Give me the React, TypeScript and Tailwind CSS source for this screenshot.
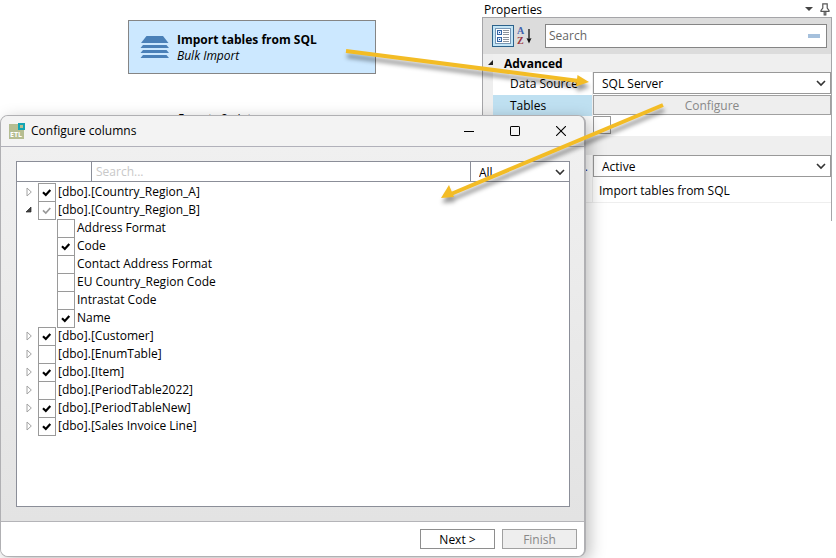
import React, { useState } from 'react';

interface TreeItem {
  id: string;
  label: string;
  checked: boolean;
  partial?: boolean;
  children?: TreeItem[];
}

const initialTables: TreeItem[] = [
  { id: 'region-a', label: '[dbo].[Country_Region_A]', checked: true },
  {
    id: 'region-b',
    label: '[dbo].[Country_Region_B]',
    checked: true,
    partial: true,
    children: [
      { id: 'address-format', label: 'Address Format', checked: false },
      { id: 'code', label: 'Code', checked: true },
      { id: 'contact-format', label: 'Contact Address Format', checked: false },
      { id: 'eu-code', label: 'EU Country_Region Code', checked: false },
      { id: 'intrastat', label: 'Intrastat Code', checked: false },
      { id: 'name', label: 'Name', checked: true },
    ],
  },
  { id: 'customer', label: '[dbo].[Customer]', checked: true },
  { id: 'enum', label: '[dbo].[EnumTable]', checked: false },
  { id: 'item', label: '[dbo].[Item]', checked: true },
  { id: 'period-2022', label: '[dbo].[PeriodTable2022]', checked: false },
  { id: 'period-new', label: '[dbo].[PeriodTableNew]', checked: true },
  { id: 'sales-line', label: '[dbo].[Sales Invoice Line]', checked: true },
];

const Chevron = () => (
  <svg className="pointer-events-none absolute top-1/2 right-1 h-2 w-2.5 -translate-y-1/2" viewBox="0 0 10 8" fill="none" stroke="#333" strokeWidth="1.6">
    <path d="M1 2 L5 6 L9 2" />
  </svg>
);

const Select = ({ id, label, options, className }: { id: string; label: string; options: string[]; className: string }) => (
  <div className={`relative bg-white ${className}`}>
    <select id={id} aria-label={label} className="h-full w-full appearance-none px-2 pt-[2px] outline-none">
      {options.map((option) => (
        <option key={option}>{option}</option>
      ))}
    </select>
    <Chevron />
  </div>
);

const CheckRow = ({ item, onToggle }: { item: TreeItem; onToggle: (id: string) => void }) => (
  <label className="flex h-[18px] items-center gap-[2px]">
    <span className="relative flex h-[18px] w-[18px]">
      <input
        type="checkbox"
        checked={item.checked}
        onChange={() => onToggle(item.id)}
        className="h-[19px] w-[18px] shrink-0 appearance-none border border-[#9a9a9a] bg-white"
      />
      {item.checked && (
        <svg className="pointer-events-none absolute inset-0" width="18" height="18" viewBox="0 0 18 18" fill="none">
          <path d="M5 9.3 L7.8 12 L12.3 7" stroke={item.partial ? '#999' : '#000'} strokeWidth={item.partial ? 1.7 : 2.2} />
        </svg>
      )}
    </span>
    <span>{item.label}</span>
  </label>
);

const Properties = () => (
  <section className="mr-1 flex w-[350px] shrink-0 flex-col">
    <header className="flex h-[17px] items-center justify-between px-[2px] pt-[2px]">
      <h2>Properties</h2>
      <div className="flex items-center gap-[6px]">
        <button aria-label="Window menu">
          <svg width="9" height="6" viewBox="0 0 9 6"><path d="M0 0 H8 L4 4 Z" fill="#444" /></svg>
        </button>
        <button aria-label="Pin">
          <svg width="10" height="13" viewBox="0 0 10 13" fill="none" stroke="#555" strokeWidth="1.2">
            <path d="M2.2 0.8 H7.8 M2.8 1 V5 L1 7.5 V8.4 H9 V7.5 L7.2 5 V1 M4.2 8.5 V12 H5.8 V8.5" />
          </svg>
        </button>
      </div>
    </header>

    <div className="flex h-[204px] flex-col border-t border-r border-l border-[#a5a5a8]">
      <div className="flex h-9 items-center bg-[#dcdcdc] pr-1 pl-[9px]">
        <button aria-label="Categorized" className="flex h-[22px] w-[22px] items-center justify-center border border-[#2c628b] bg-[#c4e5f6]">
          <svg width="16" height="16" viewBox="0 0 16 16" fill="none">
            <rect x="0.5" y="0.5" width="15" height="15" fill="#fff" stroke="#7897b5" />
            <rect x="2.5" y="2.5" width="4" height="4" fill="#dcecff" stroke="#3465a4" />
            <rect x="2.5" y="9.5" width="4" height="4" fill="#dcecff" stroke="#3465a4" />
            <path d="M4 4.5 H5 M4 11.5 H5" stroke="#173f8a" />
            <path d="M8 2.5 H14 M8 4.5 H14 M8 6.5 H14 M8 9.5 H14 M8 11.5 H14 M8 13.5 H14" stroke="#8d939b" />
          </svg>
        </button>
        <button aria-label="Alphabetical" className="ml-[3px] flex h-[22px] items-center">
          <svg width="17" height="20" viewBox="0 0 17 20" fontFamily="Liberation Serif, serif" fontSize="10" fontWeight="bold">
            <text x="0" y="8" fill="#3f62ad">A</text>
            <text x="0" y="18" fill="#9a3440">Z</text>
            <path d="M12 3 V14" stroke="#111" strokeWidth="1.3" />
            <path d="M9.5 12 L12 13 L14.5 12 L12 17.5 Z" fill="#111" />
          </svg>
        </button>
        <label className="ml-[11px] flex h-6 flex-1 items-center border border-[#858585] bg-white pr-[6px] pl-[3px]">
          <input type="text" aria-label="Search properties" placeholder="Search" className="min-w-0 flex-1 outline-none placeholder:text-[#666]" />
          <span className="h-1 w-3 bg-[#a5c0dc]" />
        </label>
      </div>

      <div className="flex flex-1 bg-white">
        <div className="w-[10px] bg-[#eee] pt-[5px] pl-[5px]">
          <svg width="6" height="6" viewBox="0 0 6 6"><path d="M6 0 V6 H0 Z" fill="#222" /></svg>
        </div>
        <div className="flex flex-1 flex-col">
          <h3 className="h-[18px] bg-[#efefef] pl-[11px] leading-5 font-bold">Advanced</h3>
          <div className="flex h-[23px]">
            <label htmlFor="source" className="w-[100px] border-r border-[#eee] pl-[17px] leading-6">Data Source</label>
            <Select id="source" label="Data Source" options={['SQL Server', 'Oracle']} className="h-[22px] flex-1 border border-[#999]" />
          </div>
          <div className="flex h-[21px]">
            <div className="w-[100px] border-r border-[#eee] bg-[#bfe0f1] pl-[17px] leading-[22px]">Tables</div>
            <button className="h-5 flex-1 border border-[#a0a0a0] bg-[#eee] pt-[2px] text-[#888]">Configure</button>
          </div>
          <div className="flex h-5 pl-[100px]">
            <input type="checkbox" aria-label="Enabled" className="h-[18px] w-[18px] appearance-none border border-[#999] bg-white" />
          </div>
          <div className="h-[19px] bg-[#efefef]" />
          <div className="flex h-[23px]">
            <div className="w-[100px] border-r border-[#eee] pr-1 text-right leading-6 text-[#23238a]">.</div>
            <Select id="status" label="Status" options={['Active', 'Inactive']} className="h-[22px] flex-1 border border-[#999]" />
          </div>
          <div className="flex h-[25px] border-b border-[#eee]">
            <div className="w-[100px] border-r border-[#eee]" />
            <div className="flex-1 pl-[6px] leading-[26px]">Import tables from SQL</div>
          </div>
        </div>
      </div>
    </div>
  </section>
);

const Canvas = () => (
  <section className="min-w-0 flex-1 bg-white pt-5 pl-32">
    <div className="flex h-[54px] w-[248px] items-center border border-[#858585] bg-[#cce8ff] pl-[11px]">
      <svg width="30" height="24" viewBox="0 0 30 24" fill="#4a80b8">
        <path d="M6.5 1 H23 L28.5 8 H1 Z" />
        <path d="M3 10 H26.5 L29 13 H0.5 Z M3 15 H26.5 L29 18 H0.5 Z M3 20 H26.5 L29 23 H0.5 Z" />
      </svg>
      <div className="pt-px pl-[7px] leading-4">
        <h1 className="font-bold">Import tables from SQL</h1>
        <p className="italic">Bulk Import</p>
      </div>
    </div>
    <p className="pt-[37px] pl-[49px] leading-4 italic">Execute Script</p>
  </section>
);

const ConfigureDialog = () => {
  const [tables, setTables] = useState(initialTables);
  const [open, setOpen] = useState<string[]>(['region-b']);

  const toggle = (id: string) => {
    const flip = (items: TreeItem[]): TreeItem[] =>
      items.map((item) => ({
        ...item,
        checked: item.id === id ? !item.checked : item.checked,
        children: item.children && flip(item.children),
      }));
    setTables(flip);
  };

  const toggleOpen = (id: string) => {
    setOpen((prev) => (prev.includes(id) ? prev.filter((x) => x !== id) : [...prev, id]));
  };

  return (
    <div role="dialog" aria-label="Configure columns" className="absolute top-[115px] right-[250px] bottom-px left-0 flex flex-col overflow-hidden rounded-lg border border-r-2 border-[#b0b0b3] bg-[#eee] shadow-[4px_4px_16px_rgba(0,0,0,0.25)]">
      <header className="flex h-[31px] items-center border-b border-[#b1b1ba] bg-[#f3f3f3] pl-2">
        <svg width="17" height="17" viewBox="0 0 17 17">
          <rect y="1" width="15" height="15" fill="#b5bd91" />
          <rect x="10" y="1" width="5" height="5" fill="#b5bd91" stroke="#12a5b4" strokeWidth="2" />
          <text x="1" y="14" fontSize="7" fontWeight="bold" fill="#fff" fontFamily="Open Sans, sans-serif">ETL</text>
        </svg>
        <h2 className="flex-1 pl-[5px]">Configure columns</h2>
        <div className="flex">
          <button aria-label="Minimize" className="flex w-[46px] justify-center"><svg width="10" height="10" viewBox="0 0 10 10" stroke="#000"><path d="M0 5.5 H10" /></svg></button>
          <button aria-label="Maximize" className="flex w-[46px] justify-center"><svg width="10" height="10" viewBox="0 0 10 10" stroke="#000" fill="none"><rect x="0.5" y="0.5" width="9" height="9" rx="0.6" /></svg></button>
          <button aria-label="Close" className="flex w-[46px] justify-center"><svg width="10" height="10" viewBox="0 0 10 10" stroke="#000" strokeWidth="1.1"><path d="M0 0 L10 10 M10 0 L0 10" /></svg></button>
        </div>
      </header>

      <div className="flex flex-1 flex-col bg-gradient-to-b from-[#f0f0f0] to-[#e3e3e3] pt-[14px] pr-[14px] pb-[14px] pl-[15px]">
        <div className="flex flex-1 flex-col border border-[#8b8e98] bg-white">
          <div className="flex h-5 border-b border-[#8b8e98]">
            <input type="text" aria-label="Filter state" className="w-[75px] border-r border-[#8b8e98] px-1 outline-none" />
            <input type="text" aria-label="Search tables" placeholder="Search..." className="min-w-0 flex-1 border-r border-[#8b8e98] px-1 outline-none placeholder:text-[#c8c8c8]" />
            <Select id="show" label="Show" options={['All', 'Selected']} className="w-[98px]" />
          </div>
          <ul className="pt-px pl-2">
            {tables.map((table) => (
              <li key={table.id}>
                <div className="flex items-center">
                  <button aria-label={`Expand ${table.label}`} onClick={() => toggleOpen(table.id)} className="flex w-[13px] items-center">
                    {open.includes(table.id) ? (
                      <svg width="8" height="8" viewBox="0 0 8 8"><path d="M6 1 V6 H1 Z" fill="#444" stroke="#222" strokeWidth="0.7" /></svg>
                    ) : (
                      <svg width="8" height="10" viewBox="0 0 8 10"><path d="M2 1 L6.3 5 L2 9 Z" fill="none" stroke="#a2a2a2" /></svg>
                    )}
                  </button>
                  <CheckRow item={table} onToggle={toggle} />
                </div>
                {table.children && open.includes(table.id) && (
                  <ul className="pl-8">
                    {table.children.map((child) => (
                      <li key={child.id}>
                        <CheckRow item={child} onToggle={toggle} />
                      </li>
                    ))}
                  </ul>
                )}
              </li>
            ))}
          </ul>
        </div>
      </div>

      <footer className="flex h-[35px] items-center justify-end gap-[7px] border-t border-[#b4b4b8] bg-white pr-[7px]">
        <button className="h-5 w-[75px] border border-[#8e8e8e] bg-white pt-[2px]">Next &gt;</button>
        <button disabled className="h-5 w-[75px] border border-[#a0a0a0] bg-[#eee] pt-[2px] text-[#888]">Finish</button>
      </footer>
    </div>
  );
};

// Callout arrows drawn over the windows
const Arrows = () => (
  <svg className="pointer-events-none absolute top-0 left-0 drop-shadow-[1px_5px_2px_rgba(0,0,0,0.4)]" width="700" height="220" viewBox="0 0 700 220" fill="#f3bc25">
    <path d="M346 51 L579 81" stroke="#f3bc25" strokeWidth="4" />
    <path d="M589 82 L576 86.5 L577.5 75 Z" />
    <path d="M663 105 L451 194" stroke="#f3bc25" strokeWidth="4" />
    <path d="M441 198 L449 185 L454 197 Z" />
  </svg>
);

const App = () => (
  <main className="relative min-h-screen overflow-hidden bg-white font-['Open_Sans','Noto_Sans',sans-serif] text-[12px] leading-4 text-black">
    <div className="flex">
      <Canvas />
      <Properties />
    </div>
    <ConfigureDialog />
    <Arrows />
  </main>
);

export default App;
